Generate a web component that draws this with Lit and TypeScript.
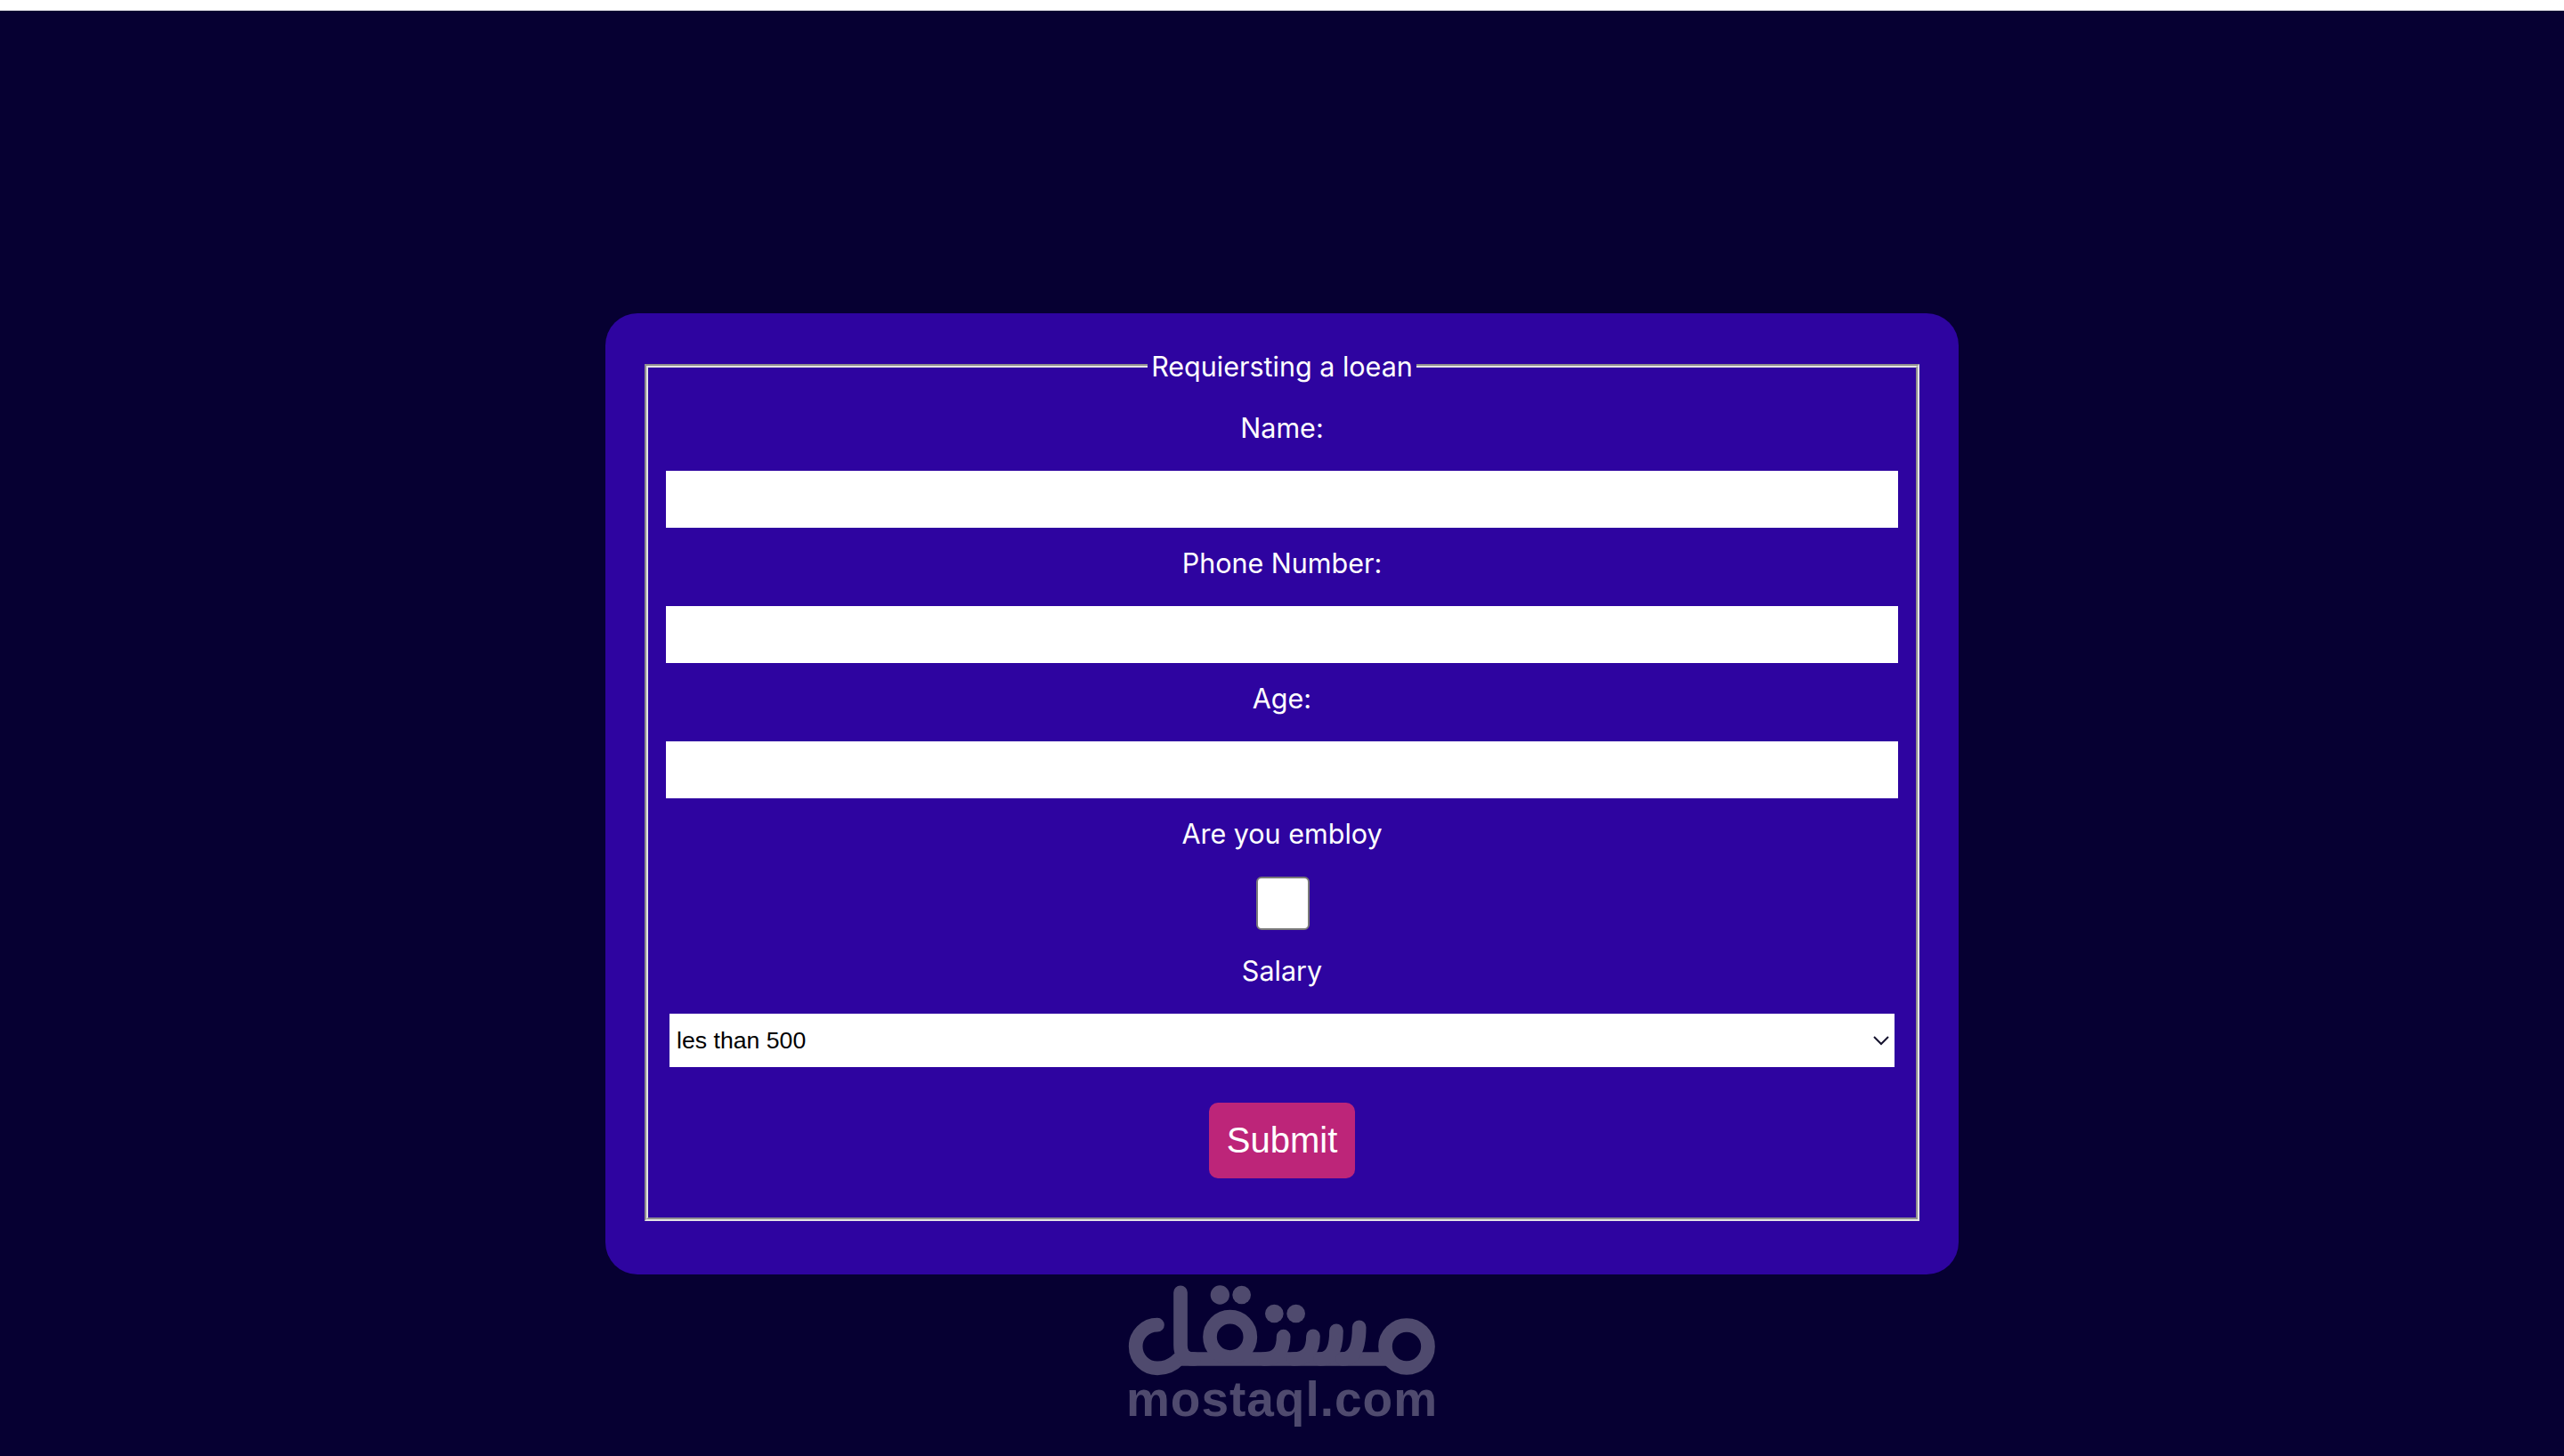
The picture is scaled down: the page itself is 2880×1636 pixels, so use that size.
import { LitElement, html, css } from "lit";
import { customElement } from "lit/decorators.js";

const fields = ["Name:", "Phone Number:", "Age:"];

@customElement("app-root")
export class AppRoot extends LitElement {
  static styles = css`
    :host {
      display: block;
      min-height: 1636px;
      box-sizing: border-box;
      background: #060032;
      border-top: 12px solid #fff;
      font-family: Inter, "Noto Sans", sans-serif;
      color: #fff;
      position: relative;
    }
    * { box-sizing: border-box; }
    .page { display: flex; justify-content: center; padding-top: 340px; }
    .card {
      width: 1520px;
      height: 1080px;
      padding: 44px 44px 60px;
      background: #2e04a0;
      border-radius: 36px;
    }
    fieldset {
      margin: 0;
      padding: 0 20px;
      height: 976px;
      border: 4px groove #e4e4e4;
      text-align: center;
      display: block;
    }
    legend {
      padding: 0 4px;
      font-size: 30.5px;
      line-height: 32px;
      height: 30px;
      margin: 0 auto;
    }
    .label {
      display: flex;
      align-items: center;
      justify-content: center;
      height: 88px;
      padding-bottom: 10px;
      font-size: 30.5px;
    }
    .first { margin-top: 15px; }
    input[type="text"] {
      display: block;
      width: 100%;
      height: 64px;
      border: 0;
      background: #fff;
      margin: 0;
    }
    .check {
      display: block;
      appearance: none;
      width: 60px;
      height: 60px;
      margin: 0 0 6px calc(50% - 29px);
      background: #fff;
      border: 2px solid #7a7a7a;
      border-radius: 6px;
    }
    .select-wrap { position: relative; margin: 0 4px; height: 60px; }
    select {
      display: block;
      appearance: none;
      width: 100%;
      height: 60px;
      border: 0;
      border-radius: 0;
      background: #fff;
      color: #000;
      padding: 0 8px;
      font-family: "Liberation Sans", Arial, sans-serif;
      font-size: 26.67px;
    }
    .chev {
      position: absolute;
      right: 6px;
      top: 24px;
      width: 18px;
      height: 12px;
      pointer-events: none;
    }
    button {
      display: block;
      margin: 40px auto 0;
      width: 164px;
      height: 85px;
      border: 0;
      border-radius: 10px;
      background: #bd2579;
      color: #fff;
      font-family: "Liberation Sans", Arial, sans-serif;
      font-size: 40px;
      padding: 0;
    }
    .logo {
      position: absolute;
      left: 1220px;
      top: 1388px;
      width: 440px;
      height: 236px;
      color: #4f4a6e;
    }
    .logo svg { display: block; }
    .logo .word {
      position: absolute;
      left: 0;
      right: 0;
      top: 142px;
      text-align: center;
      font-family: "Liberation Sans", Arial, sans-serif;
      font-weight: 700;
      font-size: 55px;
      line-height: 60px;
      letter-spacing: 1px;
    }
  `;

  render() {
    return html`
      <div class="page">
        <form class="card" @submit=${(e: Event) => e.preventDefault()}>
          <fieldset>
            <legend>Requiersting a loean</legend>
            ${fields.map(
              (f, i) => html`
                <label class="label ${i === 0 ? "first" : ""}">${f}</label>
                <input type="text" />
              `
            )}
            <label class="label">Are you embloy</label>
            <input class="check" type="checkbox" />
            <label class="label">Salary</label>
            <div class="select-wrap">
              <select><option>les than 500</option></select>
              <svg class="chev" viewBox="0 0 18 12"><path d="M1 2 L9 10 L17 2" fill="none" stroke="#15132e" stroke-width="2"/></svg>
            </div>
            <button type="submit">Submit</button>
          </fieldset>
        </form>
      </div>
      <div class="logo">
        <svg width="440" height="236" viewBox="0 0 1320 708" fill="none" stroke="currentColor" stroke-width="47" stroke-linecap="round" stroke-linejoin="round">
          <path d="M240 266 A 73 73 0 0 0 240 412 Q 282 412 312 381 L 1010 381"/>
          <path d="M318 157 L 318 335 Q 318 381 364 381"/>
          <circle cx="485" cy="307" r="68"/>
          <path d="M665 305 Q 665 381 600 381"/>
          <path d="M765 304 Q 765 381 700 381"/>
          <path d="M843 286 Q 843 381 790 381"/>
          <path d="M920 274 Q 920 381 865 381"/>
          <circle cx="1080" cy="339" r="72"/>
          <g fill="currentColor" stroke="none">
            <circle cx="451" cy="165" r="32"/>
            <circle cx="524" cy="165" r="31"/>
            <circle cx="634" cy="228" r="31"/>
            <circle cx="707" cy="228" r="31"/>
          </g>
        </svg>
        <div class="word">mostaql.com</div>
      </div>
    `;
  }
}
